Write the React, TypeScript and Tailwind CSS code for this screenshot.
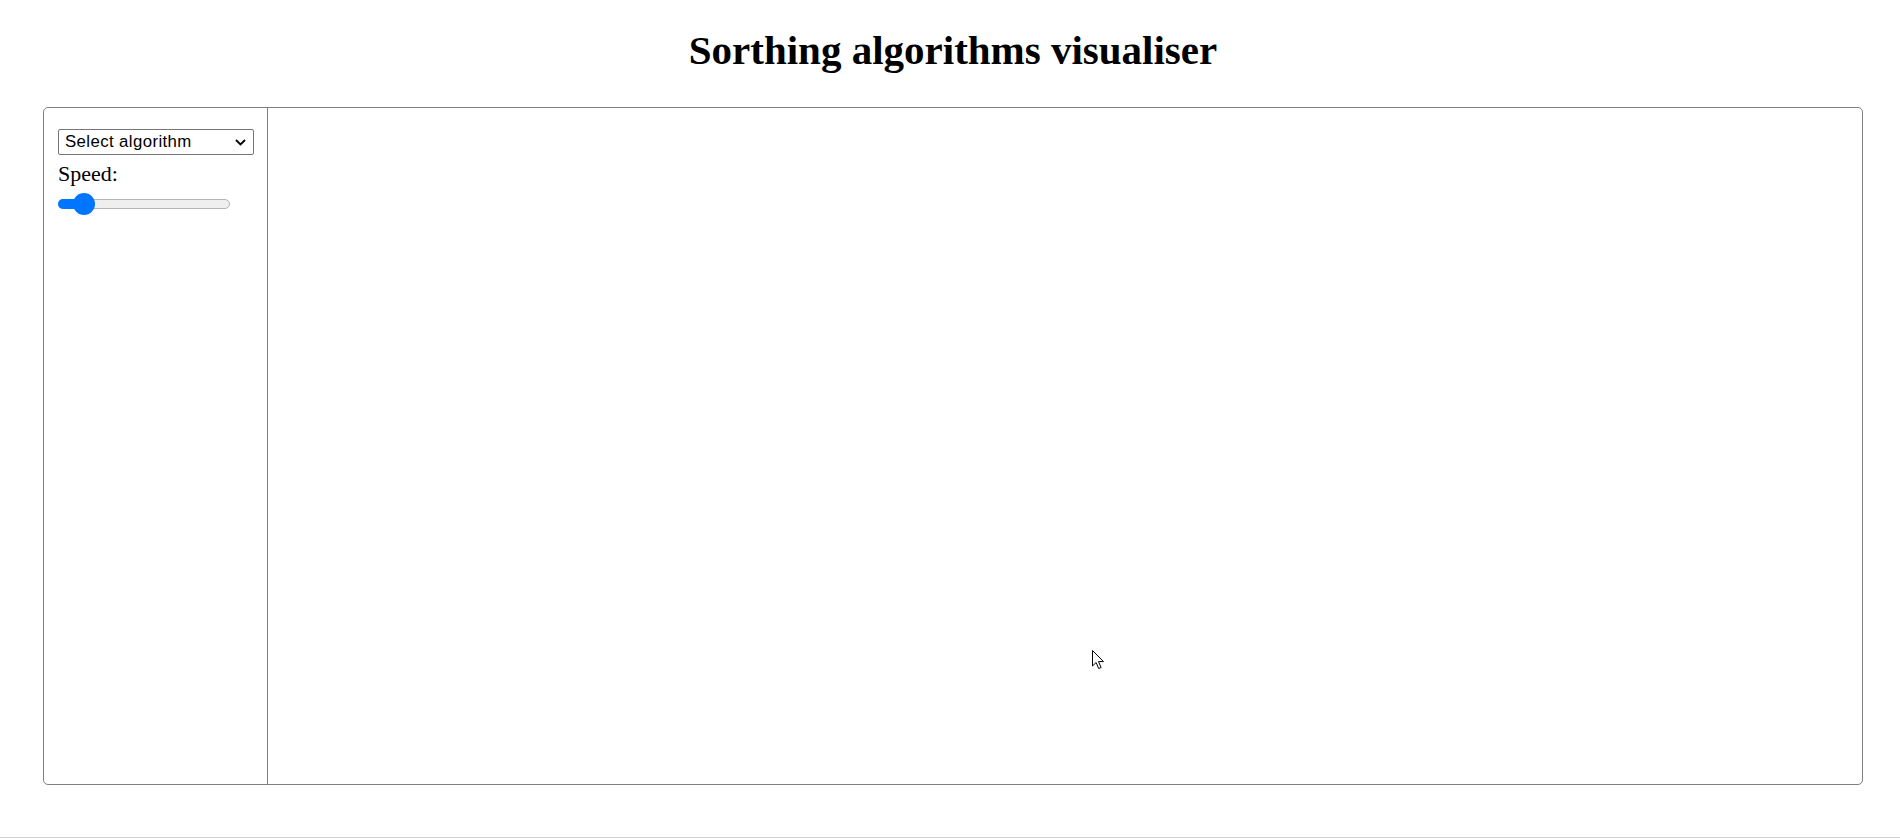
import React from "react";

export default function App() {
  return (
    <div
      className="relative h-[838px] w-full border-b border-[#d0d0d0] bg-white text-black overflow-hidden"
      style={{ fontFamily: '"Liberation Serif", "Times New Roman", serif' }}
    >
      <h1 className="m-0 pl-[6px] pt-[27px] text-center text-[41px] font-bold leading-[47px]">
        Sorthing algorithms visualiser
      </h1>
      <div className="ml-[43px] mt-[33px] flex h-[678px] w-[1820px] rounded-[5px] border border-[#808080]">
        <div className="flex w-[224px] flex-col border-r border-[#808080] pl-[14px] pt-[21px]">
          <div
            className="relative flex h-[26px] w-[196px] items-center rounded-[2px] border border-[#767676] bg-white pl-[6px] text-[16.8px] tracking-[0.4px] text-black"
            style={{ fontFamily: '"Liberation Sans", Arial, sans-serif' }}
          >
            <span>Select algorithm</span>
            <svg
              className="absolute right-[7px] top-[9px]"
              width="11"
              height="7"
              viewBox="0 0 11 7"
              fill="none"
            >
              <path d="M1 1l4.5 4.5L10 1" stroke="#000" strokeWidth="1.8" />
            </svg>
          </div>
          <div className="mt-[6px] text-[22px] leading-[25px]">Speed:</div>
          <div className="relative mt-[7px] h-[22px] w-[172px]">
            <div className="absolute left-0 right-0 top-[6px] h-[10px] rounded-full border border-[#b5b5b5] bg-[#efefef]" />
            <div className="absolute left-0 top-[6px] h-[10px] w-[26px] rounded-l-full bg-[#0075ff]" />
            <div className="absolute left-[15px] top-0 h-[22px] w-[22px] rounded-full bg-[#0075ff]" />
          </div>
        </div>
        <div className="flex-1" />
      </div>
      <svg
        className="absolute left-[1092px] top-[650px]"
        width="13"
        height="20"
        viewBox="0 0 13 20"
      >
        <path
          d="M0.5 0.5v15.5l3.6-3.5 2.6 6 2.4-1-2.6-5.9h5z"
          fill="#fff"
          stroke="#000"
          strokeWidth="1"
          strokeLinejoin="round"
        />
      </svg>
    </div>
  );
}
